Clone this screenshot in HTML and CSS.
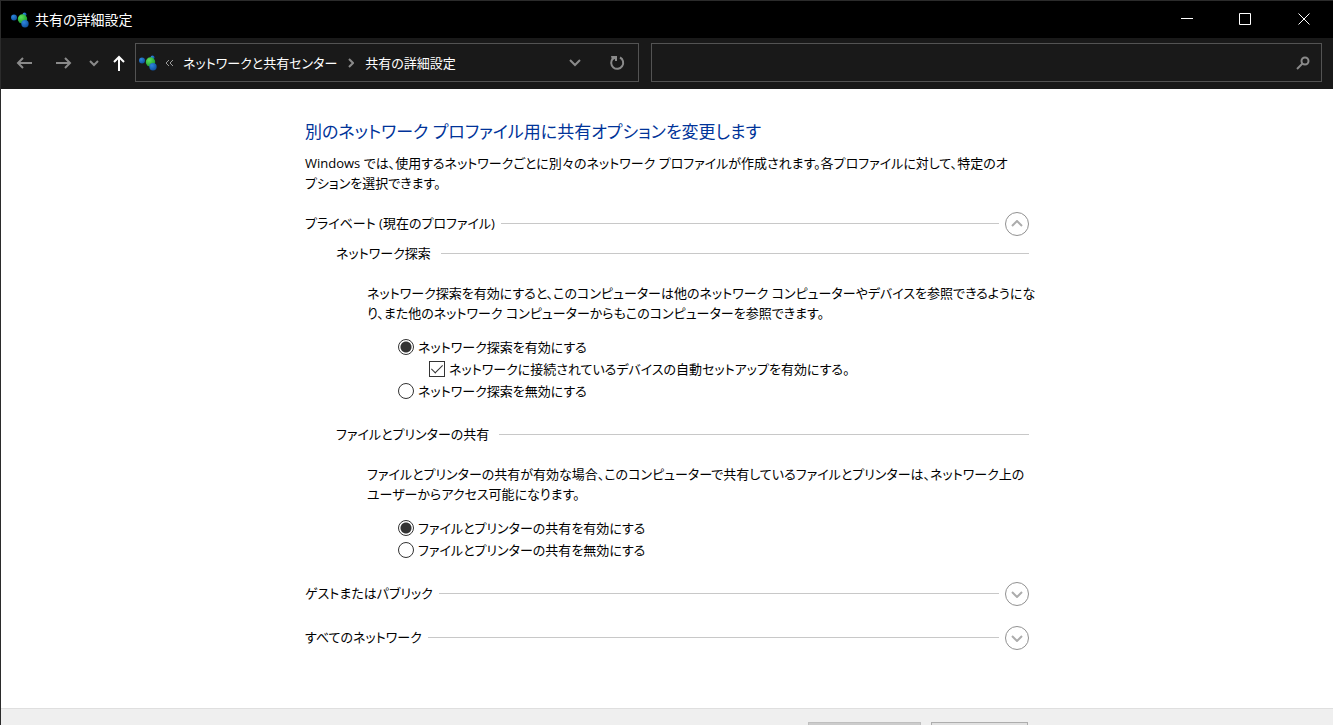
FILE: index.html
```html
<!DOCTYPE html>
<html lang="ja">
<head>
<meta charset="utf-8">
<meta name="viewport" content="width=device-width, initial-scale=1">
<title>共有の詳細設定</title>
<link rel="stylesheet" href="styles.css">
</head>
<body>
<svg class="defs" width="0" height="0" aria-hidden="true">
  <defs>
    <radialGradient id="blue" cx="35%" cy="30%" r="75%"><stop offset="0" stop-color="#2f86dc"/><stop offset="1" stop-color="#0d4f9e"/></radialGradient>
    <radialGradient id="green" cx="35%" cy="30%" r="75%"><stop offset="0" stop-color="#5fe05a"/><stop offset="1" stop-color="#159a2c"/></radialGradient>
  </defs>
  <symbol id="network" viewBox="0 0 18 16">
    <circle cx="13.500" cy="2.500" r="2" fill="url(#blue)"/>
    <circle cx="3" cy="5.500" r="3" fill="url(#blue)"/>
    <circle cx="11.500" cy="7" r="4.700" fill="url(#green)"/>
    <circle cx="14" cy="11.800" r="3.700" fill="url(#blue)"/>
  </symbol>
</svg>
<div class="window">
  <header class="titlebar">
    <svg class="app-icon" aria-hidden="true"><use href="#network"/></svg>
    <span class="title">共有の詳細設定</span>
    <div class="caption-buttons">
      <button class="caption-button"><svg width="14" height="14" viewBox="0 0 14 14"><path d="M0 5.500h12"/></svg></button>
      <button class="caption-button"><svg width="14" height="14" viewBox="0 0 14 14"><path d="M.5 .5h11v11h-11z"/></svg></button>
      <button class="caption-button"><svg width="14" height="14" viewBox="0 0 14 14"><path d="M1.500 .5l11 11M12.500 .5l-11 11"/></svg></button>
    </div>
  </header>

  <nav class="toolbar">
    <button class="nav-button"><svg width="17" height="14" viewBox="0 0 17 14"><path d="M16 7H2M7 2L2 7l5 5"/></svg></button>
    <button class="nav-button"><svg width="17" height="14" viewBox="0 0 17 14"><path d="M1 7h14M10 2l5 5-5 5"/></svg></button>
    <button class="nav-button nav-narrow"><svg width="10" height="8" viewBox="0 0 10 8"><path d="M1 2l4 4 4-4"/></svg></button>
    <button class="nav-button nav-up"><svg width="12" height="16" viewBox="0 0 12 16"><path d="M6 16V2M1 7l5-5 5 5"/></svg></button>
    <div class="address">
      <svg class="app-icon" aria-hidden="true"><use href="#network"/></svg>
      <svg class="overflow" width="9" height="8" viewBox="0 0 9 8"><path d="M4 1L1 4l3 3M8 1L5 4l3 3"/></svg>
      <a class="crumb" href="#">ネットワークと共有センター</a>
      <svg class="separator" width="6" height="10" viewBox="0 0 6 10"><path d="M1 1l4 4-4 4"/></svg>
      <a class="crumb" href="#">共有の詳細設定</a>
      <button class="address-drop"><svg width="12" height="8" viewBox="0 0 12 8"><path d="M1 1l5 5 5-5"/></svg></button>
      <button class="address-refresh"><svg width="16" height="16" viewBox="0 0 16 16"><path d="M11 2.500A6 6 0 1 1 4 3.500"/><path class="solid" d="M2 1h6v5H6V4L3 5z"/></svg></button>
    </div>
    <div class="search">
      <input class="search-input" type="text" aria-label="検索">
      <svg class="search-icon" width="14" height="14" viewBox="0 0 14 14"><circle cx="9" cy="5" r="3.500"/><path d="M6.500 7.500L1 13"/></svg>
    </div>
  </nav>

  <main class="page">
    <div class="column">
      <h1 class="heading">別のネットワーク プロファイル用に共有オプションを変更します</h1>
      <p class="text">Windows では、使用するネットワークごとに別々のネットワーク プロファイルが作成されます。各プロファイルに対して、特定のオ<br>プションを選択できます。</p>

      <section class="profile">
        <div class="profile-head">
          <h2 class="label">プライベート (現在のプロファイル)</h2>
          <button class="expander"><svg width="12" height="8" viewBox="0 0 12 8"><path d="M1 6l5-5 5 5"/></svg></button>
        </div>

        <section class="topic">
          <h3 class="topic-head label">ネットワーク探索</h3>
          <p class="topic-text text">ネットワーク探索を有効にすると、このコンピューターは他のネットワーク コンピューターやデバイスを参照できるようにな<br>り、また他のネットワーク コンピューターからもこのコンピューターを参照できます。</p>
          <div class="options">
            <label class="option"><input class="radio" type="radio" name="discovery" checked>ネットワーク探索を有効にする</label>
            <label class="option option-sub"><input class="check" type="checkbox" checked>ネットワークに接続されているデバイスの自動セットアップを有効にする。</label>
            <label class="option"><input class="radio" type="radio" name="discovery">ネットワーク探索を無効にする</label>
          </div>
        </section>

        <section class="topic">
          <h3 class="topic-head label">ファイルとプリンターの共有</h3>
          <p class="topic-text text">ファイルとプリンターの共有が有効な場合、このコンピューターで共有しているファイルとプリンターは、ネットワーク上の<br>ユーザーからアクセス可能になります。</p>
          <div class="options">
            <label class="option"><input class="radio" type="radio" name="sharing" checked>ファイルとプリンターの共有を有効にする</label>
            <label class="option"><input class="radio" type="radio" name="sharing">ファイルとプリンターの共有を無効にする</label>
          </div>
        </section>
      </section>

      <section class="profile">
        <div class="profile-head">
          <h2 class="label">ゲストまたはパブリック</h2>
          <button class="expander"><svg width="12" height="8" viewBox="0 0 12 8"><path d="M1 2l5 5 5-5"/></svg></button>
        </div>
      </section>

      <section class="profile">
        <div class="profile-head">
          <h2 class="label">すべてのネットワーク</h2>
          <button class="expander"><svg width="12" height="8" viewBox="0 0 12 8"><path d="M1 2l5 5 5-5"/></svg></button>
        </div>
      </section>
    </div>
  </main>

  <footer class="footer">
    <div class="column actions">
      <button class="action action-save" disabled></button>
      <button class="action action-cancel"></button>
    </div>
  </footer>
</div>
</body>
</html>
```
FILE: styles.css
```css
* {
  box-sizing: border-box;
}

body {
  margin: 0;
  height: 100vh;
  overflow: hidden;
  background: #fff;
  color: #000;
  font: 13px/20px "Open Sans", "Noto Sans CJK JP", sans-serif;
  font-feature-settings: "palt";
}

h1, h2, h3, p {
  margin: 0;
  font-size: inherit;
  font-weight: 400;
}

button, input {
  margin: 0;
  padding: 0;
  border: 0;
  background: none;
  color: inherit;
  font: inherit;
}

svg {
  display: block;
  flex: none;
  fill: none;
  stroke: currentColor;
}

.defs {
  position: absolute;
}

.window {
  height: 100%;
  overflow: hidden;
  border: solid #2b2b2b;
  border-width: 1px 0 0 1px;
}

.app-icon {
  width: 18px;
  height: 16px;
  stroke: none;
}

/* Title bar */
.titlebar {
  display: flex;
  align-items: center;
  height: 37px;
  padding-left: 10px;
  gap: 6px;
  background: #000;
  color: #fff;
  font-size: 14px;
}

.caption-buttons {
  display: flex;
  margin-left: auto;
}

.caption-button {
  display: flex;
  align-items: center;
  justify-content: center;
  width: 58px;
  height: 37px;
}

/* Navigation bar */
.toolbar {
  display: flex;
  align-items: center;
  height: 51px;
  padding: 0 11px 2px 4px;
  background: #191919;
  color: #8a8a8a;
}

.nav-button {
  display: flex;
  align-items: center;
  justify-content: center;
  width: 39px;
  height: 39px;
  stroke-width: 2;
}

.nav-narrow {
  width: 22px;
}

.nav-up {
  width: 28px;
  margin-right: 2px;
  color: #fff;
}

.address,
.search {
  display: flex;
  align-items: center;
  min-width: 0;
  height: 39px;
  border: 1px solid #535353;
}

.address {
  flex: 3;
  color: #fff;
  white-space: nowrap;
}

.address .app-icon {
  margin-left: 3px;
}

.overflow {
  margin: 0 9px 0 8px;
  color: #9a9a9a;
}

.crumb {
  color: inherit;
  text-decoration: none;
}

.separator {
  margin: 0 11px;
  color: #8a8a8a;
  stroke-width: 2;
}

.address-drop,
.address-refresh {
  display: flex;
  align-items: center;
  justify-content: center;
  height: 37px;
  width: 42px;
  color: #8a8a8a;
  stroke-width: 2;
}

.address-drop {
  margin-left: auto;
}

.solid {
  fill: currentColor;
  stroke: none;
}

.search {
  flex: 4;
  margin-left: 12px;
}

.search-input {
  flex: 1;
  min-width: 0;
  height: 37px;
  outline: 0;
}

.search-icon {
  margin-right: 11px;
  stroke-width: 2;
}

/* Content */
.page {
  padding: 31px 16px 58px;
}

.column {
  max-width: 724px;
  margin: 0 auto;
}

.heading {
  margin-bottom: 9px;
  color: #003399;
  font-size: 17px;
  line-height: 24px;
}

.text {
  white-space: nowrap;
}

.profile {
  margin-top: 19px;
}

.profile + .profile {
  margin-top: 20px;
}

.profile-head {
  display: flex;
  align-items: center;
  gap: 6px;
}

.label {
  display: flex;
  flex: 1;
  align-items: center;
  white-space: nowrap;
}

.label::after {
  content: "";
  flex: 1;
  height: 1px;
  margin-left: 6px;
  background: #c8c8c8;
}

.profile-head .label {
  padding-bottom: 2px;
}

.expander {
  display: flex;
  align-items: center;
  justify-content: center;
  width: 24px;
  height: 24px;
  border: 1px solid #919191;
  border-radius: 50%;
  color: #acacac;
  stroke-width: 2;
}

.topic {
  padding-left: 31px;
}

.topic:last-child {
  padding-bottom: 2px;
}

.topic + .topic {
  margin-top: 23px;
}

.topic-head {
  margin-top: 7px;
}

.topic-head::after {
  margin-left: 10px;
}

.topic-text {
  margin-top: 20px;
  padding-left: 31px;
}

.options {
  display: flex;
  flex-direction: column;
  gap: 2px;
  margin-top: 14px;
  padding-left: 62px;
}

.option {
  display: flex;
  align-items: center;
  gap: 4px;
}

.option-sub {
  padding-left: 31px;
}

.radio,
.check {
  appearance: none;
  flex: none;
  width: 16px;
  height: 16px;
  border: 1px solid #333;
  background: #fff;
}

.radio {
  border-radius: 50%;
}

.radio:checked {
  background: radial-gradient(circle, #333 5px, #fff 6px);
}

.check:checked::before {
  content: "";
  display: block;
  width: 5px;
  height: 10px;
  margin: 0 auto;
  border: solid #333;
  border-width: 0 1px 1px 0;
  transform: rotate(45deg);
}

/* Bottom bar */
.footer {
  padding: 13px 16px 12px;
  border-top: 1px solid #dfdfdf;
  background: #efefef;
}

.actions {
  display: flex;
  justify-content: flex-end;
  gap: 10px;
  padding-right: 1px;
}

.action {
  height: 32px;
  border: 1px solid #adadad;
  background: #e1e1e1;
}

.action-save {
  width: 113px;
  border-color: #bfbfbf;
  background: #ccc;
}

.action-cancel {
  width: 97px;
}
```
